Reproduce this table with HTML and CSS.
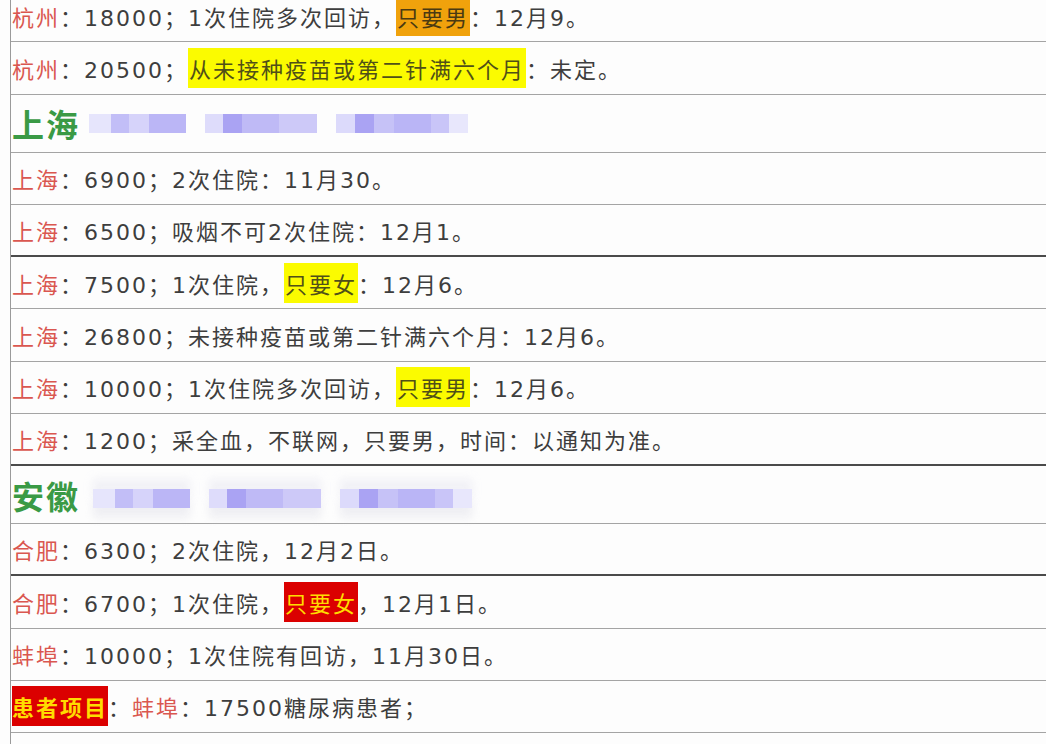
FILE: index.html
```html
<!DOCTYPE html>
<html lang="zh-CN">
<head>
<meta charset="utf-8">
<title>献血招募信息</title>
<link rel="stylesheet" href="styles.css">
</head>
<body>
<div class="sheet">
  <div class="row"><span class="city">杭州</span>：18000；1次住院多次回访，<span class="hl hl-orange">只要男</span>：12月9。</div>
  <div class="row"><span class="city">杭州</span>：20500；<span class="hl hl-yellow">从未接种疫苗或第二针满六个月</span>：未定。</div>
  <div class="row row-head">
    <span class="head">上海</span>
    <div class="mosaic">
      <div class="blk blk-a"></div>
      <div class="blk blk-b"></div>
      <div class="blk blk-c"></div>
    </div>
  </div>
  <div class="row"><span class="city">上海</span>：6900；2次住院：11月30。</div>
  <div class="row row-dark"><span class="city">上海</span>：6500；吸烟不可2次住院：12月1。</div>
  <div class="row"><span class="city">上海</span>：7500；1次住院，<span class="hl hl-yellow">只要女</span>：12月6。</div>
  <div class="row"><span class="city">上海</span>：26800；未接种疫苗或第二针满六个月：12月6。</div>
  <div class="row"><span class="city">上海</span>：10000；1次住院多次回访，<span class="hl hl-yellow">只要男</span>：12月6。</div>
  <div class="row row-dark"><span class="city">上海</span>：1200；采全血，不联网，只要男，时间：以通知为准。</div>
  <div class="row row-head">
    <span class="head">安徽</span>
    <div class="mosaic mosaic-low">
      <div class="blk blk-a"></div>
      <div class="blk blk-b"></div>
      <div class="blk blk-c"></div>
    </div>
  </div>
  <div class="row row-dark"><span class="city">合肥</span>：6300；2次住院，12月2日。</div>
  <div class="row"><span class="city">合肥</span>：6700；1次住院，<span class="hl hl-red">只要女</span>，12月1日。</div>
  <div class="row"><span class="city">蚌埠</span>：10000；1次住院有回访，11月30日。</div>
  <div class="row"><span class="hl hl-red hl-bold">患者项目</span>：<span class="city">蚌埠</span>：17500糖尿病患者；</div>
  <div class="row"></div>
</div>
</body>
</html>
```

FILE: styles.css
```css
html, body {
  margin: 0;
  padding: 0;
  background: #fdfdfd;
}

body {
  font-family: "DejaVu Sans", "Noto Sans CJK SC", sans-serif;
  color: #3e3e3e;
  overflow: hidden;
}

.sheet {
  margin: -10px 0 0 10px;
  border-left: 1px solid #9a9a9a;
}

.row {
  box-sizing: border-box;
  height: 52.25px;
  display: flex;
  align-items: center;
  padding-left: 1px;
  border-bottom: 1px solid #a4a4a4;
  font-size: 22px;
  letter-spacing: 2px;
  white-space: nowrap;
}

.row-dark {
  border-bottom: 2px solid #4a4a4a;
}

.row-head {
  height: 58px;
}

.city {
  color: #da5750;
}

.hl {
  padding: 4px 1px;
}

.hl-orange {
  background: #f0a20c;
  color: #4a3a12;
}

.hl-yellow {
  background: #fbfb00;
  color: #505018;
}

.hl-red {
  background: #db0000;
  color: #ffdc00;
}

.hl-bold {
  font-weight: 600;
  padding: 4px 0;
}

.head {
  font-family: "Noto Sans CJK SC", sans-serif;
  font-size: 32px;
  font-weight: 700;
  letter-spacing: 2px;
  color: #3a9a45;
}

.mosaic {
  display: flex;
  align-items: center;
  margin-left: 9px;
  gap: 19px;
  filter: blur(0.4px);
}

.mosaic-low {
  margin-top: 8px;
  margin-left: 13px;
}

.blk {
  height: 19px;
}

.blk-a {
  width: 97px;
  background: linear-gradient(to right,
    #e6e5fc 0, #e6e5fc 22px,
    #c2bef7 22px, #c2bef7 40px,
    #d6d3fa 40px, #d6d3fa 60px,
    #bbb6f6 60px, #bbb6f6 97px);
}

.blk-b {
  width: 112px;
  background: linear-gradient(to right,
    #dedcfb 0, #dedcfb 18px,
    #aaa3f3 18px, #aaa3f3 37px,
    #bfbaf6 37px, #bfbaf6 74px,
    #cdc9f8 74px, #cdc9f8 112px);
}

.blk-c {
  width: 132px;
  background: linear-gradient(to right,
    #dcdafb 0, #dcdafb 19px,
    #aaa3f3 19px, #aaa3f3 38px,
    #c6c2f7 38px, #c6c2f7 58px,
    #bab5f6 58px, #bab5f6 95px,
    #c9c5f8 95px, #c9c5f8 113px,
    #e8e7fc 113px, #e8e7fc 132px);
}

.mosaic-low .blk {
  box-shadow: 0 -10px 8px rgba(236, 236, 244, 0.7), 0 10px 8px rgba(230, 230, 236, 0.6);
}
```
